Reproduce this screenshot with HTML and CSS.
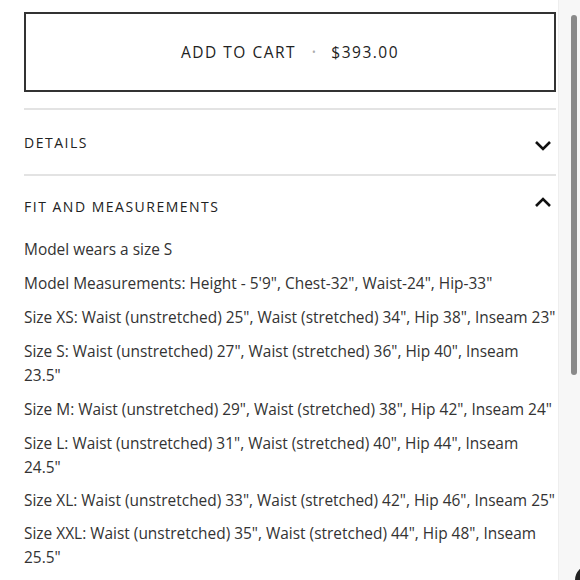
FILE: index.html
```html
<!DOCTYPE html>
<html lang="en">
<head>
<meta charset="utf-8">
<title>Product</title>
<link rel="stylesheet" href="styles.css">
</head>
<body>
<div class="page">
  <main class="main">
    <button class="cart-btn" type="button">
      <span>ADD TO CART</span><span class="dot">•</span><span>$393.00</span>
    </button>
    <section class="acc">
      <div class="acc-head">
        <span class="acc-title">DETAILS</span>
        <svg class="chev chev-down" width="18" height="11" viewBox="0 0 18 11"><polyline points="2,2 9,9 16,2" fill="none" stroke="#111" stroke-width="2.6"/></svg>
      </div>
    </section>
    <section class="acc open">
      <div class="acc-head">
        <span class="acc-title">FIT AND MEASUREMENTS</span>
        <svg class="chev chev-up" width="18" height="11" viewBox="0 0 18 11"><polyline points="2,9 9,2 16,9" fill="none" stroke="#111" stroke-width="2.6"/></svg>
      </div>
      <div class="acc-body">
        <p>Model wears a size S</p>
        <p>Model Measurements: Height - 5'9", Chest-32", Waist-24", Hip-33"</p>
        <p>Size XS: Waist (unstretched) 25", Waist (stretched) 34", Hip 38", Inseam 23"</p>
        <p>Size S: Waist (unstretched) 27", Waist (stretched) 36", Hip 40", Inseam 23.5"</p>
        <p>Size M: Waist (unstretched) 29", Waist (stretched) 38", Hip 42", Inseam 24"</p>
        <p>Size L: Waist (unstretched) 31", Waist (stretched) 40", Hip 44", Inseam 24.5"</p>
        <p>Size XL: Waist (unstretched) 33", Waist (stretched) 42", Hip 46", Inseam 25"</p>
        <p>Size XXL: Waist (unstretched) 35", Waist (stretched) 44", Hip 48", Inseam 25.5"</p>
      </div>
    </section>
  </main>
  <div class="scroll-track"><div class="scroll-thumb"></div></div>
</div>
<div class="corner-bubble"></div>
</body>
</html>
```
FILE: styles.css
```css
* { box-sizing: border-box; }
html, body { margin: 0; padding: 0; background: #fff; }
body {
  font-family: "Open Sans", "Liberation Sans", sans-serif;
  color: #333;
  overflow: hidden;
  height: 580px;
}
.page {
  display: flex;
  height: 580px;
}
.main {
  width: 558px;
  padding: 12px 0 0 24px;
}
.cart-btn {
  display: flex;
  justify-content: center;
  align-items: center;
  width: 532px;
  height: 80px;
  margin: 0 0 16px 0;
  border: 2px solid #333;
  background: #fff;
  font-family: "Open Sans", sans-serif;
  font-size: 15.5px;
  letter-spacing: 1.5px;
  color: #222;
  padding: 0;
}
.cart-btn .dot {
  color: #aaa;
  font-size: 10px;
  margin: 0 14px 0 16px;
}
.acc {
  width: 532px;
  border-top: 2px solid #e3e3e3;
}
.acc-head {
  display: flex;
  justify-content: space-between;
  align-items: center;
  height: 64px;
}
.acc.open .acc-head { height: 61px; }
.acc-title {
  font-size: 14px;
  letter-spacing: 1.5px;
  color: #222;
}
.chev { margin-right: 4px; }
.chev-down { margin-top: 6px; }
.chev-up { margin-bottom: 8px; }
.acc-body p {
  width: 533px;
  margin: 0 0 10px 0;
  font-size: 15.45px;
  line-height: 24px;
  color: #333;
}
.acc-body p:nth-child(n+6) { margin-bottom: 9px; }
.scroll-track {
  width: 22px;
  height: 580px;
  background: #f7f7f7;
  border-left: 1px solid #eeeeee;
  padding: 15px 4px 0 12px;
}
.scroll-thumb {
  width: 6px;
  height: 360px;
  border-radius: 3px;
  background: #8a8a8a;
}
.corner-bubble {
  position: absolute;
  left: 575px;
  top: 565px;
  width: 30px;
  height: 30px;
  border-radius: 50%;
  background: #222;
}
```
